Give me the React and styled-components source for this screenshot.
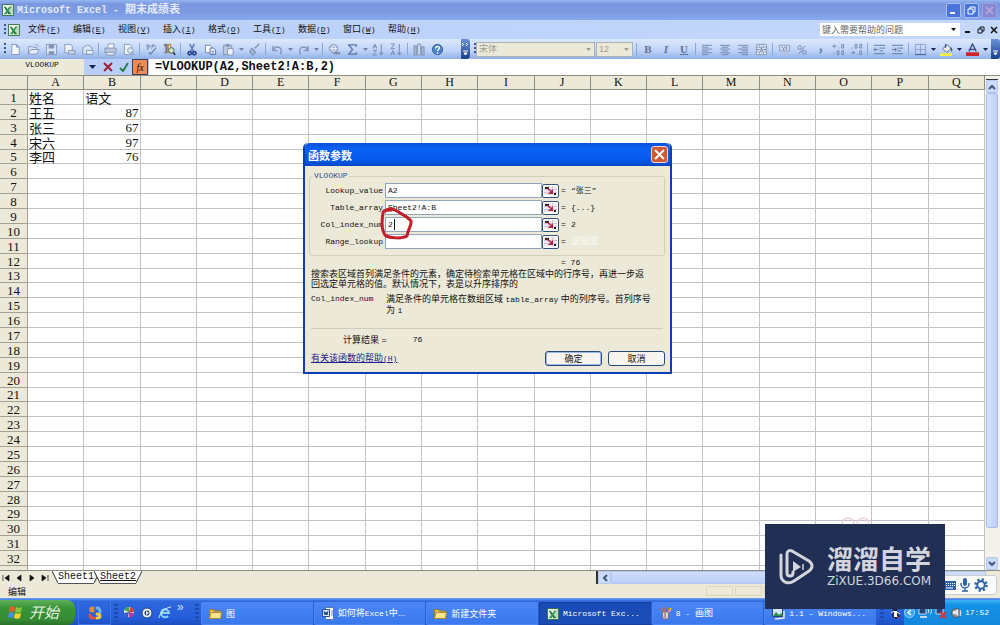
import React from 'react'
import styled, { createGlobalStyle } from 'styled-components'

const columns = 'ABCDEFGHIJKLMNOPQ'.split('')
const rowCount = 33

const cells = {
  A1: '姓名', B1: '语文',
  A2: '王五', B2: 87,
  A3: '张三', B3: 67,
  A4: '宋六', B4: 97,
  A5: '李四', B5: 76,
}

const menus = [
  ['文件', 'F'], ['编辑', 'E'], ['视图', 'V'], ['插入', 'I'], ['格式', 'O'],
  ['工具', 'T'], ['数据', 'D'], ['窗口', 'W'], ['帮助', 'H'],
]

const args = [
  { id: 'lookup', label: 'Lookup_value', value: 'A2', result: '“张三”' },
  { id: 'table', label: 'Table_array', value: 'Sheet2!A:B', result: '{...}' },
  { id: 'col', label: 'Col_index_num', value: '2', result: '2', caret: true },
  { id: 'range', label: 'Range_lookup', value: '', result: '逻辑值', ghost: true },
]

const tasks = [
  { icon: 'folder', cjk: '图' },
  { icon: 'word', cjk: '如何将', text: 'Excel', after: '中...' },
  { icon: 'folder', cjk: '新建文件夹' },
  { icon: 'excel', text: 'Microsoft Exc...', active: true },
  { icon: 'paint', text: '8 - ', after: '画图' },
  { icon: 'image', text: '1.1 - Windows...' },
]

/* toolbar drawings, 14 x 14 */
const g = '#8296b8'
const glyphs = {
  page: <path d="M3 1.5h5l3 3v8H3z M8 1.5v3h3" fill="#f4f7fd" stroke={g} />,
  open: <path d="M1.5 12V4h4l1 1h4v2 M1.5 12l2.500-5h9l-2.500 5z M8 3c2-2 4-1 4 1" fill="#e4ebf7" stroke={g} />,
  save: <><path d="M1.500 1.500h11v11h-11z" fill="#dbe5f5" stroke={g} /><path d="M4 2h6v4H4z M4 9h6v3H4z" fill={g} /></>,
  mail: <><path d="M2 1.500h6l2 2v7H2z" fill="#eef3fb" stroke={g} /><path d="M6 8h7v4H6z" fill="#c9d6ea" stroke={g} /></>,
  lock: <><path d="M2 5l5-3 5 3v7H2z" fill="#dde6f5" stroke={g} /><path d="M6 8h7v4H6z" fill="#eff3fb" stroke={g} /></>,
  print: <><path d="M4 5l1-4h6l-1 4" fill="#fff" stroke={g} /><path d="M1 5.500h12v5H1z" fill="#b9c6dd" stroke={g} /><path d="M3 10h8v3H3z" fill="#eee" stroke={g} /></>,
  preview: <><path d="M2.500 1.500h6l2 2v9h-8z" fill="#eef3fb" stroke={g} /><circle cx="9" cy="8" r="3" fill="#dbe6f6" stroke={g} /><path d="M11 10l2 3" stroke={g} /></>,
  spell: <><path d="M1 3h5M3 1v6M2 7l4-4M7 3h5M9 1l-2 5" stroke="#7389b3" fill="none" /><path d="M4 10l2 2 6-7" stroke="#6d88bd" fill="none" strokeWidth="1.5" /></>,
  research: <><path d="M1 1h4v10H1z" fill="#6d7096" /><path d="M5 1h4v10H5z" fill="#b8974a" /><path d="M2 3v7M7 3v7" stroke="#fff" /><circle cx="9" cy="8" r="3" fill="#cdeab2" stroke="#4d5e7d" /><path d="M11 10l2 3" stroke="#3b4665" strokeWidth="2" /></>,
  cut: <><path d="M4 1l4 8M9 1L5 9" stroke="#5a78ad" strokeWidth="1.500" /><circle cx="4" cy="11" r="1.700" fill="none" stroke="#27478a" strokeWidth="1.800" /><circle cx="9" cy="11" r="1.700" fill="none" stroke="#27478a" strokeWidth="1.800" /></>,
  copy: <><path d="M1.500 2.500h5l2 2v6h-7z" fill="#fff" stroke="#6482b5" /><path d="M6.500 5.500h4l2 2v5h-6z" fill="#e8f0fc" stroke="#5273ab" /><path d="M8 9h3M8 11h3" stroke="#6482b5" /></>,
  paste: <><path d="M1.500 2.500h9v10h-9z" fill="#bac8df" stroke={g} /><path d="M4 1h4v3H4z" fill={g} /><path d="M6 6h6v7H6z" fill="#edf2fa" stroke={g} /></>,
  brush: <path d="M12 1L7 6M4 6l4 4-3 3-3-4z" stroke={g} fill="#aebcd4" strokeWidth="1.500" />,
  undo: <path d="M2 3v5h5M2 8c2-5 9-5 9 1 0 1 0 2-1 3" stroke={g} fill="none" strokeWidth="1.500" />,
  redo: <path d="M12 3v5H7M12 8c-2-5-9-5-9 1 0 1 0 2 1 3" stroke={g} fill="none" strokeWidth="1.500" />,
  link: <><circle cx="6" cy="6" r="4.500" fill="#b3bdd3" stroke={g} /><path d="M2 6h8M6 2c-3 3-3 5 0 8M6 2c3 3 3 5 0 8" stroke="#eef" fill="none" /><path d="M6 11h3M9 11h4" stroke="#8393b1" strokeWidth="3" /></>,
  sum: <path d="M11 4V2H3l4 5-4 5h8v-2" stroke="#5d76a8" fill="none" strokeWidth="1.500" />,
  sortAsc: <path d="M1 6l2-5 2 5M2 4h3M1 8h4l-4 5h4M10 1v11M8 10l2 3 2-3" stroke="#7388b0" fill="none" />,
  sortDesc: <path d="M1 1h4L1 6h4M1 13l2-5 2 5M2 11h3M10 1v11M8 10l2 3 2-3" stroke="#7388b0" fill="none" />,
  chart: <><path d="M1 3h3v10H1z M9 4h3v9H9z" fill="#a4b4d0" stroke={g} /><path d="M5 1h3v12H5z" fill="#d3dcec" stroke={g} /></>,
  help: <><circle cx="7" cy="7" r="5.500" fill="#4c84c8" stroke="#2c5b9c" /><path d="M5 6c0-3 4-3 4-.5C9 7 7 7 7 8.500M7 10v1.500" stroke="#fff" fill="none" strokeWidth="1.500" /></>,
  left: <path d="M1 2.500h11M1 4.500h7M1 6.500h11M1 8.500h7M1 10.500h11M1 12.500h7" stroke="#6f86ae" />,
  center: <path d="M1 2.500h11M3 4.500h7M1 6.500h11M3 8.500h7M1 10.500h11M3 12.500h7" stroke="#6f86ae" />,
  right: <path d="M1 2.500h11M5 4.500h7M1 6.500h11M5 8.500h7M1 10.500h11M5 12.500h7" stroke="#6f86ae" />,
  merge: <><path d="M1.500 1.500h11v11h-11z M1 4.500h12M1 9.500h12M5 1v3M9 1v3M5 10v3M9 10v3" stroke="#8d9dba" fill="#e1e9f6" /><path d="M2 7h3M9 7h3M6 9l1-4 1 4" stroke="#66799e" fill="none" /></>,
  currency: <><path d="M1.500 2.500h11v6h-11z" stroke="#8d9dba" fill="#cfdaec" /><path d="M4 4l2 2 2-2M6 6v2M9 4v3" stroke="#7589ad" fill="none" /><path d="M5 10h6v3H5z" fill="#b6c3d9" /></>,
  percent: <><circle cx="4" cy="5" r="2" fill="none" stroke="#7388b0" /><circle cx="9" cy="10" r="2" fill="none" stroke="#7388b0" /><path d="M10 3L3 12" stroke="#7388b0" /></>,
  comma: <path d="M6 7h2v2l-2 2" fill="none" stroke="#6980ab" strokeWidth="1.500" />,
  decInc: <path d="M5 3.500H1M3 1.500l-2 2 2 2M8 5v1M10.500 1.500h2v4h-2zM2 11v1M5.500 8.500h2v4h-2zM10.500 8.500h2v4h-2z" stroke="#7388b0" fill="none" />,
  decDec: <path d="M2 5v1M5.500 1.500h2v4h-2zM10.500 1.500h2v4h-2zM1 10.500h4M3 8.500l2 2-2 2M8 12v1M10.500 8.500h2v4h-2z" stroke="#7388b0" fill="none" />,
  outdent: <path d="M1 2.500h12M7 5.500h6M7 8.500h4M1 11.500h12M6 7H1M3 5L1 7l2 2" stroke="#5f77a4" fill="none" />,
  indent: <path d="M1 2.500h12M7 5.500h6M7 8.500h4M1 11.500h12M1 7h5M4 5l2 2-2 2" stroke="#5f77a4" fill="none" />,
  border: <><path d="M1.500 1.500h11v11M1.500 1.500v11M7 1.500v11M1.500 7h11" stroke="#8da2c8" fill="none" /><path d="M1 12.500h12" stroke="#3f5682" /></>,
  fill: <><path d="M3 6l5-4 4 4-5 4z" fill="#f1f3f5" stroke="#52698d" /><path d="M6 1v4M11 5c2 1 2 3 1 4" stroke="#40577e" fill="none" strokeWidth="1.500" /><path d="M0 11h13v3H0z" fill="#f5ee3d" /></>,
  fontColor: <><path d="M3 9l4-8 4 8M4 7h6" stroke="#3c5385" fill="none" strokeWidth="1.500" /><path d="M0 10h14v4H0z" fill="#d3222a" /></>,
}

const standardTools = [
  'page', 'open', 'save', 'mail', 'lock', '|', 'print', 'preview', '|', 'spell', 'research', '|',
  'cut', 'copy', 'paste', 'v', 'brush', '|', 'undo', 'v', 'redo', 'v', '|', 'link', 'sum', 'v',
  'sortAsc', 'sortDesc', '|', 'chart', 'help',
]
const alignTools = ['left', 'center', 'right', 'merge', '|', 'currency', 'percent', 'comma', 'decInc', 'decDec', '|', 'outdent', 'indent', '|']

const Arrow = () => (
  <svg width="5" height="3" viewBox="0 0 5 3"><path d="M0 0h5L2.500 3z" fill="currentColor" /></svg>
)

const ExcelIcon = () => (
  <svg width="12" height="12" viewBox="0 0 13 13">
    <path d="M.5.5h12v12H.5z" fill="#e9f3e6" stroke="#2f6e45" />
    <path d="M8 2h4v9H8z" fill="#bcd8bf" />
    <path d="M2 3h2l6 8H7z" fill="#1f7a3a" />
    <path d="M10 3H8l-6 8h3z" fill="#2f9a50" />
  </svg>
)

const taskIcons = {
  folder: (
    <svg width="13" height="12" viewBox="0 0 13 12">
      <path d="M.5 10.500v-9h4l1 1.500h6v7.500z" fill="#e9b93f" stroke="#9b7a22" />
      <path d="M.5 10.500l1.500-6h10.500l-1 6z" fill="#fbe58b" stroke="#b08d30" />
    </svg>
  ),
  word: (
    <svg width="12" height="13" viewBox="0 0 12 13">
      <path d="M3.500.5h8v12h-8z" fill="#fff" stroke="#5676ae" />
      <path d="M.5 2.500h7v7h-7z" fill="#dfe8f8" stroke="#234b96" />
      <path d="M2 4l1 4 1-3 1 3 1-4" fill="none" stroke="#19408d" />
      <path d="M9 4h2M9 6h2M9 8h2" stroke="#6e8bc0" />
    </svg>
  ),
  excel: <ExcelIcon />,
  paint: (
    <svg width="12" height="13" viewBox="0 0 12 13">
      <path d="M2 5h7l-1 7H3z" fill="#d8d8dc" stroke="#6c6f7c" />
      <path d="M3 5L1 1M5 5V0M7 5l2-4" stroke="#c8673a" strokeWidth="1.500" />
      <path d="M9 5l2-4" stroke="#e9c23e" strokeWidth="1.500" />
      <path d="M5 6v5" stroke="#b04040" />
    </svg>
  ),
  image: (
    <svg width="13" height="12" viewBox="0 0 13 12">
      <path d="M.5.5h10v8H.5z" fill="#cfe8f8" stroke="#2c4468" />
      <path d="M1 8l3-4 3 3 2-2 2 3z" fill="#2f8b49" />
      <path d="M3 11l9-1V3" stroke="#e9edf5" fill="none" strokeWidth="1.500" />
    </svg>
  ),
}

function Tool({ name }) {
  if (name === '|') return <Divider />
  if (name === 'v') return <DropArrow type="button" aria-label="more"><Arrow /></DropArrow>
  return (
    <ToolButton type="button" aria-label={name}>
      <svg width="13" height="13" viewBox="0 0 14 14">{glyphs[name]}</svg>
    </ToolButton>
  )
}

function Sheet() {
  return (
    <SheetArea>
      <TableWrap>
        <Table>
          <thead>
            <tr>
              <Corner />
              {columns.map(c => <ColHead key={c} scope="col">{c}</ColHead>)}
            </tr>
          </thead>
          <tbody>
            {Array.from({ length: rowCount }, (_, i) => i + 1).map(n => (
              <tr key={n}>
                <RowHead scope="row">{n}</RowHead>
                {columns.map(c => (
                  <Cell key={c} $number={typeof cells[c + n] === 'number'}>{cells[c + n]}</Cell>
                ))}
              </tr>
            ))}
          </tbody>
        </Table>
      </TableWrap>
      <VScroll>
        <Splitter />
        <ScrollButton type="button" aria-label="up"><svg width="8" height="6" viewBox="0 0 8 6"><path d="M1 5l3-3 3 3" fill="none" stroke="#3f5682" strokeWidth="2" /></svg></ScrollButton>
        <VThumb />
        <ScrollButton type="button" aria-label="down"><svg width="8" height="6" viewBox="0 0 8 6"><path d="M1 1l3 3 3-3" fill="none" stroke="#3f5682" strokeWidth="2" /></svg></ScrollButton>
      </VScroll>
    </SheetArea>
  )
}

function FunctionDialog() {
  return (
    <Dialog role="dialog" aria-label="函数参数">
      <DialogTitle>
        函数参数
        <CloseButton type="button" aria-label="close">
          <svg width="11" height="11" viewBox="0 0 11 11"><path d="M1 1l9 9M10 1l-9 9" stroke="#fff" strokeWidth="2" /></svg>
        </CloseButton>
      </DialogTitle>
      <DialogBody>
        <Group>
          <Legend>VLOOKUP</Legend>
          {args.map(a => (
            <ArgRow key={a.id}>
              <ArgLabel htmlFor={a.id}>{a.label}</ArgLabel>
              <ArgBox $caret={a.caret}>
                <ArgInput id={a.id} defaultValue={a.value} />
                {a.caret && <Caret />}
              </ArgBox>
              <PickButton type="button" aria-label={'select ' + a.label}>
                <svg width="13" height="9" viewBox="0 0 13 9">
                  <path d="M0 0h13v9H0z" fill="#f3e9ee" />
                  <path d="M0 3.500h13M0 6.500h13M4.500 0v9M8.500 0v9" stroke="#d0c4d8" />
                  <path d="M1 1h4v2H1z M10 7h2v2h-2z" fill="#222" />
                  <path d="M3 2l5 4" stroke="#b52440" strokeWidth="1.500" fill="none" />
                  <path d="M9 3v5H4z" fill="#b52440" />
                </svg>
              </PickButton>
              <Equals>=</Equals>
              <Result $ghost={a.ghost}>{a.result}</Result>
            </ArgRow>
          ))}
        </Group>
        <Total>= 76</Total>
        <Description>
          搜索表区域首列满足条件的元素，确定待检索单元格在区域中的行序号，再进一步返<br />
          回选定单元格的值。默认情况下，表是以升序排序的
        </Description>
        <ArgHelp>
          <Latin>Col_index_num</Latin>
          <div>满足条件的单元格在数组区域 <Latin>table_array</Latin> 中的列序号。首列序号<br />为 <Latin>1</Latin></div>
        </ArgHelp>
        <Rule />
        <Outcome>
          <span>计算结果 =</span>
          <Latin>76</Latin>
        </Outcome>
        <DialogFooter>
          <HelpLink href="#help">有关该函数的帮助<Latin>(H)</Latin></HelpLink>
          <DialogButton type="button" $primary>确定</DialogButton>
          <DialogButton type="button">取消</DialogButton>
        </DialogFooter>
      </DialogBody>
      <RedMark width="36" height="36" viewBox="0 0 36 36">
        <path d="M5 6C9 2 13 4 17 6c4 3 10 5 14 10 1 4-3 8-4 15-5 3-16 2-21 0C1 26 2 14 3 8c0-3 4-3 8-3" fill="none" stroke="#c41e2a" strokeWidth="3" strokeLinecap="round" strokeLinejoin="round" />
      </RedMark>
    </Dialog>
  )
}

function Taskbar() {
  return (
    <Bar>
      <StartButton type="button">
        <svg width="15" height="15" viewBox="0 0 15 15">
          <path d="M2 2c2-1 3-1 5 0L6 7C4 6 3 6 1 7z" fill="#f0592a" />
          <path d="M8 2c2 1 4 1 6 0l-1 5c-2 1-4 1-6 0z" fill="#8cc63e" />
          <path d="M1 8c2-1 3-1 5 0l-1 5c-2-1-3-1-5 0z" fill="#4a8ff0" />
          <path d="M7 8c2 1 4 1 6 0l-1 5c-2 1-4 1-6 0z" fill="#fcd22f" />
        </svg>
        开始
      </StartButton>
      <Pinned type="button" aria-label="office">
        <svg width="14" height="14" viewBox="0 0 14 14" fill="none" strokeWidth="3" strokeLinecap="round">
          <path d="M5 2C2 2 2 5 5 5" stroke="#f08a35" /><path d="M9 2c3 0 3 2 3 4" stroke="#6ab6f5" />
          <path d="M2 9c0 3 2 3 4 3" stroke="#e7513c" /><path d="M9 8c4 0 4 4 0 4" stroke="#f1c84a" />
        </svg>
      </Pinned>
      <Grip />
      <QuickLaunch>
        <IconButton type="button" aria-label="pinwheel">
          <svg width="13" height="13" viewBox="0 0 13 13">
            <circle cx="6" cy="6" r="5" fill="#eee" />
            <path d="M6 6L1 4a5 5 0 0 1 5-3z" fill="#3fa34a" /><path d="M6 6l1-5a5 5 0 0 1 4 5z" fill="#e03a3a" />
            <path d="M6 6l5 1a5 5 0 0 1-5 5z" fill="#b53aa0" /><path d="M6 6l-1 5a5 5 0 0 1-4-4z" fill="#3658c0" />
          </svg>
        </IconButton>
        <IconButton type="button" aria-label="player">
          <svg width="12" height="12" viewBox="0 0 12 12"><circle cx="6" cy="6" r="5" fill="#e9eef8" stroke="#27406f" /><circle cx="6" cy="6" r="2.500" fill="#26406e" /><path d="M5 4l3 2-3 2z" fill="#fff" /></svg>
        </IconButton>
        <IconButton type="button" aria-label="browser">
          <svg width="14" height="13" viewBox="0 0 14 13"><path d="M3 7h8a4 4 0 1 0-1 3" fill="none" stroke="#8ed3fa" strokeWidth="2" /><path d="M1 12C1 8 8 1 13 1" fill="none" stroke="#d3efff" /></svg>
        </IconButton>
        <More>»</More>
      </QuickLaunch>
      <Grip />
      <Tasks>
        {tasks.map((t, i) => (
          <Task type="button" key={i} $active={t.active}>
            {taskIcons[t.icon]}
            <TaskText>{t.cjk}{t.text && <TaskLatin>{t.text}</TaskLatin>}{t.after}</TaskText>
          </Task>
        ))}
      </Tasks>
      <Grip />
      <PenguinCell>
        <svg width="11" height="12" viewBox="0 0 11 12"><circle cx="5" cy="3" r="2.500" fill="#1c2538" /><path d="M2 5h7l1 5-4 2-4-2z" fill="#26304a" /><path d="M4 4h3v6H4z" fill="#fff" /><path d="M1 6l3-2M7 5l3 2" stroke="#fff" /><path d="M7 9l2 2" stroke="#e44" /></svg>
      </PenguinCell>
      <Tray>
        <svg width="11" height="11" viewBox="0 0 11 11"><circle cx="5.500" cy="5.500" r="5" fill="#3fa2f2" stroke="#9fd2fa" /><path d="M7 3L4 5.500 7 8" fill="none" stroke="#fff" strokeWidth="1.500" /></svg>
        <svg width="14" height="12" viewBox="0 0 14 12"><path d="M1 1h7v6H1z" fill="#24457c" stroke="#c7d8ee" /><path d="M2 10h7" stroke="#c7d8ee" strokeWidth="2" /><path d="M10 2c1 1 1 3 0 4M12 1c2 2 2 4 0 6" stroke="#e0eaf8" fill="none" /></svg>
        <svg width="13" height="12" viewBox="0 0 13 12"><path d="M1 1h7v6H1z" fill="#24457c" stroke="#c7d8ee" /><path d="M5 5l6 6M11 5l-6 6" stroke="#d8343c" strokeWidth="2" /></svg>
        <svg width="11" height="12" viewBox="0 0 11 12"><circle cx="5" cy="6" r="4.500" fill="#8b93a3" stroke="#4e5768" /><path d="M2 4h2l3-2v7L4 7H2z" fill="#e4e7ee" /><path d="M9 3c1 2 1 4 0 6" stroke="#fff" fill="none" /></svg>
        <Clock>17:52</Clock>
      </Tray>
    </Bar>
  )
}

function App() {
  return (
    <Page>
      <GlobalStyle />
      <TitleBar>
        <ExcelIcon />
        <TitleText><TitleLatin>Microsoft Excel - </TitleLatin>期末成绩表</TitleText>
        <WinButton type="button" aria-label="minimize"><svg width="9" height="9" viewBox="0 0 9 9"><path d="M1 7h5" stroke="#fff" strokeWidth="2" /></svg></WinButton>
        <WinButton type="button" aria-label="restore"><svg width="9" height="9" viewBox="0 0 9 9"><path d="M3 3V1h5v5H6M1 3h5v5H1z" stroke="#fff" fill="none" /></svg></WinButton>
        <WinButton type="button" aria-label="close" $dim><svg width="9" height="9" viewBox="0 0 9 9"><path d="M1 1l7 7M8 1L1 8" stroke="#b3a3d6" strokeWidth="2" /></svg></WinButton>
      </TitleBar>

      <MenuBar>
        <DotGrip />
        <MenuIcon><ExcelIcon /></MenuIcon>
        {menus.map(([name, key]) => (
          <MenuItem type="button" key={key}>{name}<Latin>(<u>{key}</u>)</Latin></MenuItem>
        ))}
        <Ask>
          <AskInput aria-label="键入需要帮助的问题" placeholder="键入需要帮助的问题" />
          <Arrow />
        </Ask>
        <DocButtons>
          <IconButton type="button" aria-label="minimize"><svg width="8" height="8" viewBox="0 0 8 8"><path d="M1 6h5" stroke="#111" strokeWidth="2" /></svg></IconButton>
          <IconButton type="button" aria-label="restore"><svg width="8" height="8" viewBox="0 0 8 8"><path d="M3 3V1h4v4H5M1 3h4v4H1z" stroke="#111" fill="none" /></svg></IconButton>
          <IconButton type="button" aria-label="close"><svg width="8" height="8" viewBox="0 0 8 8"><path d="M1 1l6 6M7 1L1 7" stroke="#111" strokeWidth="1.500" /></svg></IconButton>
        </DocButtons>
      </MenuBar>

      <ToolBars>
        <StandardBar>
          <DotGrip $tight />
          {standardTools.map((t, i) => <Tool key={i} name={t} />)}
        </StandardBar>
        <BarEnd><svg width="7" height="14" viewBox="0 0 7 14"><path d="M0 1l1.500 1.500L0 4M4 1l1.500 1.500L4 4" stroke="#fff" fill="none" /><path d="M1 9h5M2 11l1.500 2L5 11z" stroke="#fff" fill="#fff" /></svg></BarEnd>
        <FormatBar>
          <DotGrip $tight />
          <FakeSelect $wide><select aria-label="font" defaultValue="宋体"><option>宋体</option></select><Arrow /></FakeSelect>
          <FakeSelect><select aria-label="size" defaultValue="12"><option>12</option></select><Arrow /></FakeSelect>
          <Divider />
          <Letter type="button" $bold>B</Letter>
          <Letter type="button" $italic>I</Letter>
          <Letter type="button" $under>U</Letter>
          <Divider />
          {alignTools.map((t, i) => <Tool key={i} name={t} />)}
          <Live>
            {['border', 'v', 'fill', 'v', 'fontColor', 'v'].map((t, i) => <Tool key={i} name={t} />)}
          </Live>
        </FormatBar>
        <BarEnd><svg width="7" height="14" viewBox="0 0 7 14"><path d="M1 9h5M2 11l1.500 2L5 11z" stroke="#fff" fill="#fff" /></svg></BarEnd>
      </ToolBars>

      <FormulaBar>
        <NameBox aria-label="name box" defaultValue="VLOOKUP" />
        <FormulaTools>
          <IconButton type="button" aria-label="names"><svg width="7" height="4" viewBox="0 0 7 4"><path d="M0 0h7L3.500 4z" fill="#16264e" /></svg></IconButton>
          <IconButton type="button" aria-label="cancel"><svg width="10" height="10" viewBox="0 0 10 10"><path d="M1 1l8 8M9 1L1 9" stroke="#a3202f" strokeWidth="2" /></svg></IconButton>
          <IconButton type="button" aria-label="enter"><svg width="10" height="10" viewBox="0 0 10 10"><path d="M1 6l3 3 5-8" stroke="#26804a" fill="none" strokeWidth="2" /></svg></IconButton>
          <FxButton type="button">fx</FxButton>
        </FormulaTools>
        <FormulaInput aria-label="formula" defaultValue="=VLOOKUP(A2,Sheet2!A:B,2)" />
      </FormulaBar>

      <Sheet />

      <TabBar>
        <TabNav>
          {['M1 1v6M7 1v6L3 4z', 'M6 1v6L2 4z', 'M2 1v6l4-3z', 'M7 1v6M1 1v6l4-3z'].map(d => (
            <IconButton type="button" key={d} aria-label="scroll tabs"><svg width="8" height="8" viewBox="0 0 8 8"><path d={d} fill="#111" stroke="#111" strokeWidth=".7" /></svg></IconButton>
          ))}
        </TabNav>
        <svg width="6" height="13" viewBox="0 0 6 13"><path d="M0 0l6 12V0z" fill="#fff" /><path d="M0 0l6 12" stroke="#333" /></svg>
        <SheetTab type="button">Sheet1</SheetTab>
        <svg width="6" height="13" viewBox="0 0 6 13"><path d="M0 0h6v12z" fill="#fff" /><path d="M0 0l6 12M3 6L0 12" stroke="#333" fill="none" /></svg>
        <SheetTab type="button" $under>Sheet2</SheetTab>
        <svg width="6" height="13" viewBox="0 0 6 13"><path d="M0 0h6L0 12z" fill="#fff" /><path d="M6 0L0 12" stroke="#333" /></svg>
        <HScroll>
          <HButton type="button" aria-label="left"><svg width="6" height="8" viewBox="0 0 6 8"><path d="M5 1L2 4l3 3" fill="none" stroke="#3f5682" strokeWidth="2" /></svg></HButton>
          <HThumb />
        </HScroll>
      </TabBar>

      <StatusBar>
        编辑
        <StatusCells><i /><i /><i /><i /></StatusCells>
      </StatusBar>

      <Taskbar />

      <FunctionDialog />

      <ImeBar>
        <svg width="13" height="9" viewBox="0 0 13 9"><path d="M0 0h13v9H0z" fill="#2e62a8" /><path d="M1 2.500h11M1 4.500h11" stroke="#fff" strokeDasharray="1 1" /><path d="M3 7h7" stroke="#fff" /></svg>
        <svg width="10" height="14" viewBox="0 0 10 14"><rect x="3" y="0" width="4" height="8" rx="2" fill="#2e62a8" /><path d="M1 5v1a4 4 0 0 0 8 0V5M5 10v3M2 13h6" fill="none" stroke="#2e62a8" strokeWidth="1.500" /></svg>
        <svg width="14" height="14" viewBox="0 0 14 14"><circle cx="7" cy="7" r="5.500" fill="none" stroke="#2e62a8" strokeWidth="2.500" strokeDasharray="2.160 2.160" /><circle cx="7" cy="7" r="3.700" fill="none" stroke="#2e62a8" strokeWidth="2" /></svg>
      </ImeBar>

      <Watermark>
        <Ears width="30" height="8" viewBox="0 0 30 8"><path d="M1 8a6 6 0 0 1 12 0M16 8a6 6 0 0 1 12 0" fill="none" stroke="#ecd3db" strokeWidth="1.500" /></Ears>
        <svg width="36" height="36" viewBox="0 0 36 36" fill="none" stroke="#d3d5dd">
          <path d="M14 23v1c0 4-6 4-6 0V5c0-3 2-4 5-3l17 10c4 3 4 7 0 10L15 32c-6 4-13 1-13-6V6" strokeWidth="3" strokeLinecap="round" strokeLinejoin="round" />
          <path d="M14 12v11l8-5z" fill="#d3d5dd" stroke="none" />
          <path d="M24 15v6" strokeWidth="1.500" />
        </svg>
        <div>
          <MarkName>溜溜自学</MarkName>
          <MarkUrl>ZiXUE.3D66.COM</MarkUrl>
        </div>
      </Watermark>
    </Page>
  )
}

export default App

const GlobalStyle = createGlobalStyle`
  * {
    box-sizing: border-box;
  }

  body {
    margin: 0;
    overflow: hidden;
    background: #fff;
    font-family: "Liberation Sans", "Noto Sans CJK SC", sans-serif;
  }

  button,
  input,
  select {
    font: inherit;
    color: inherit;
    margin: 0;
    padding: 0;
    border: 0;
    background: none;
    outline: none;
    border-radius: 0;
  }

  svg {
    display: block;
    flex: none;
  }
`

const Page = styled.div`
  position: relative;
  display: flex;
  flex-direction: column;
  height: 100vh;
  color: #111;
  font-size: 9px;
`

const Latin = styled.span`
  font-family: "Liberation Mono", monospace;
  font-size: 8px;
`

const IconButton = styled.button`
  display: flex;
  align-items: center;
  justify-content: center;
`

const TitleBar = styled.header`
  display: flex;
  align-items: center;
  gap: 3px;
  flex: none;
  height: 20px;
  padding: 0 3px 0 2px;
  background: linear-gradient(#94b8f2 0, #7b96e0 4px, #7c9ae2 12px, #86a9ee 100%);
`

const TitleText = styled.h1`
  flex: 1;
  margin: 0;
  color: #e4ecfc;
  font-size: 11px;
  line-height: 16px;
  font-weight: bold;
`

const TitleLatin = styled.span`
  font-family: "Liberation Mono", monospace;
  font-size: 10px;
  white-space: pre;
`

const WinButton = styled(IconButton)`
  width: 15px;
  height: 15px;
  border: 1px solid ${p => (p.$dim ? '#9d9fdc' : '#a9bff2')};
  border-radius: 2px;
  background: ${p => (p.$dim ? '#8488d0' : '#4a74dc')};
`

const MenuBar = styled.nav`
  display: flex;
  align-items: center;
  flex: none;
  height: 19px;
  padding-left: 4px;
  background: linear-gradient(90deg, #b9cffa, #c4d8fb);
`

const DotGrip = styled.span`
  flex: none;
  width: 2px;
  height: 12px;
  margin-right: ${p => (p.$tight ? 0 : 2)}px;
  background: repeating-linear-gradient(#3a5488 0 2px, transparent 2px 4px);
`

const MenuIcon = styled.span`
  margin-right: 8px;
`

const MenuItem = styled.button`
  width: 45px;
  text-align: left;
  font-size: 9px;
  line-height: 14px;
  white-space: nowrap;
`

const Ask = styled.div`
  display: flex;
  align-items: center;
  width: 140px;
  height: 13px;
  margin-left: auto;
  padding: 0 4px 0 2px;
  background: #fff;
`

const AskInput = styled.input`
  flex: 1;
  min-width: 0;
  font-size: 9px;

  &::placeholder {
    color: #666;
    opacity: 1;
  }
`

const DocButtons = styled.div`
  display: flex;
  gap: 5px;
  padding: 0 2px 0 4px;
`

const ToolBars = styled.div`
  display: flex;
  flex: none;
  height: 20px;
  background: #c4d8fb;
`

const StandardBar = styled.div`
  display: flex;
  align-items: center;
  flex: none;
  width: 461px;
  padding-left: 4px;
  background: linear-gradient(#dce9fd, #bdd2f7 60%, #8fb0e6);
`

const FormatBar = styled(StandardBar)`
  flex: 1;
  width: auto;
  min-width: 0;
`

const ToolButton = styled(IconButton)`
  flex: none;
  width: 18px;
  height: 16px;
`

const DropArrow = styled(IconButton)`
  flex: none;
  width: 8px;
  height: 16px;
  color: #6f83a8;
`

const Divider = styled.span`
  flex: none;
  width: 1px;
  height: 12px;
  margin: 0 2px;
  background: #8aa5d6;
`

const BarEnd = styled.span`
  display: flex;
  align-items: center;
  justify-content: center;
  flex: none;
  width: 9px;
  border-radius: 0 3px 3px 0;
  background: linear-gradient(#6d93d6, #17408c);
`

const FakeSelect = styled.label`
  display: flex;
  align-items: center;
  flex: none;
  width: ${p => (p.$wide ? 119 : 37)}px;
  height: 15px;
  margin-right: 1px;
  padding: 0 3px 0 2px;
  border: 1px solid #a9b3bd;
  background: #ece9d8;
  color: #a19e93;

  select {
    appearance: none;
    flex: 1;
    min-width: 0;
    font-size: 9px;
  }
`

const Letter = styled.button`
  width: 18px;
  color: #5f7398;
  font-family: "Liberation Serif", serif;
  font-size: 11px;
  font-weight: bold;
  font-style: ${p => (p.$italic ? 'italic' : 'normal')};
  text-decoration: ${p => (p.$under ? 'underline' : 'none')};
`

const Live = styled.div`
  display: flex;

  ${DropArrow} {
    color: #16264e;
  }
`

const FormulaBar = styled.div`
  display: flex;
  flex: none;
  height: 16px;
  background: #fff;
`

const NameBox = styled.input`
  width: 84px;
  padding-bottom: 5px;
  background: #ece9d8;
  text-align: center;
  font-family: "Liberation Mono", monospace;
  font-size: 8px;
`

const FormulaTools = styled.div`
  display: flex;
  width: 65px;
  background: #b9cffa;

  button {
    width: 16px;
  }
`

const FxButton = styled(IconButton)`
  border: 1px solid #3a3f5c;
  background: #ef8a55;
  font-family: "Liberation Serif", serif;
  font-size: 10px;
  font-style: italic;
`

const FormulaInput = styled.input`
  flex: 1;
  padding-left: 6px;
  font-family: "Liberation Mono", monospace;
  font-size: 12px;
  font-weight: bold;
`

const SheetArea = styled.main`
  display: flex;
  flex: 1;
  min-height: 0;
`

const TableWrap = styled.div`
  flex: 1;
  min-width: 0;
  overflow: hidden;
`

/* the last row runs under the tab bar */
const Table = styled.table`
  width: 100%;
  height: calc(100% + 11px);
  table-layout: fixed;
  border-collapse: separate;
  border-spacing: 0;

  th,
  td {
    padding: 0;
    line-height: 13px;
    vertical-align: bottom;
    white-space: nowrap;
  }
`

const ColHead = styled.th`
  border: 1px solid #8f8d80;
  border-width: 1px 1px 1px 0;
  background: #ece9d8;
  font-family: "Liberation Serif", serif;
  font-size: 12px;
  font-weight: normal;
`

const Corner = styled(ColHead)`
  width: 28px;
`

const RowHead = styled.th`
  border: 1px solid #a3a194;
  border-width: 0 1px 1px 0;
  background: #ece9d8;
  font-family: "Liberation Serif", serif;
  font-size: 13px;
  font-weight: normal;
`

const Cell = styled.td`
  border: 1px solid #c3c3c3;
  border-width: 0 1px 1px 0;
  font-family: ${p => (p.$number ? '"Liberation Serif", serif' : '"Noto Sans CJK SC", sans-serif')};
  font-size: 13px;
  text-align: ${p => (p.$number ? 'right' : 'left')};

  && {
    padding: 0 1px;
  }
`

const VScroll = styled.div`
  display: flex;
  flex-direction: column;
  flex: none;
  width: 15px;
  padding: 1px 2px 0 1px;
  border-top: 1px solid #8f8d80;
  background: #f3f2ea;
`

const Splitter = styled.span`
  height: 3px;
  border-bottom: 1px solid #333;
`

const ScrollButton = styled(IconButton)`
  flex: none;
  height: 13px;
  border: 1px solid #b3c7f2;
  border-radius: 2px;
  background: #cddbfb;
`

const VThumb = styled.div`
  flex: 1;
  margin-bottom: 29px;
  border: 1px solid #a9bff0;
  border-radius: 2px;
  background: linear-gradient(90deg, #d6e2fd, #bdcff8);
`

const TabBar = styled.div`
  display: flex;
  align-items: flex-start;
  flex: none;
  height: 14px;
  border-top: 1px solid #8f8d80;
  background: #ece9d8;
`

const TabNav = styled.div`
  display: flex;
  gap: 5px;
  height: 13px;
  padding: 0 3px 0 2px;
`

const SheetTab = styled.button`
  height: 13px;
  border-bottom: 1px solid #555;
  background: #fff;
  font-family: "Liberation Mono", monospace;
  font-size: 10px;
  line-height: 12px;
  text-decoration: ${p => (p.$under ? 'underline' : 'none')};
`

const HScroll = styled.div`
  display: flex;
  width: 390px;
  height: 13px;
  margin: 0 14px 0 auto;
  border-left: 2px solid #333;
`

const HButton = styled(ScrollButton)`
  width: 13px;
`

const HThumb = styled.div`
  flex: 1;
  border: 1px solid #b3c7f2;
  background: linear-gradient(#d0defc, #bccff8);
`

const StatusBar = styled.footer`
  display: flex;
  align-items: center;
  flex: none;
  height: 14px;
  padding-left: 8px;
  background: #ece9d8;
`

const StatusCells = styled.span`
  display: flex;
  gap: 2px;
  margin: 0 180px 0 auto;

  i {
    width: 27px;
    height: 10px;
    border: 1px solid #dad6c4;
  }
`

const Bar = styled.div`
  display: flex;
  flex: none;
  height: 27px;
  padding-top: 2px;
  background: linear-gradient(#6aa2f2 0, #2f68dc 3px, #245edb 70%, #1d4fc0);
`

const StartButton = styled.button`
  display: flex;
  align-items: center;
  gap: 6px;
  width: 75px;
  padding-left: 8px;
  border-radius: 0 8px 8px 0;
  background: linear-gradient(#5fb05b, #3a9539 30%, #348a33 80%, #2a702b);
  color: #e6f3e2;
  font-size: 15px;
  font-style: italic;
  line-height: 20px;
`

const Pinned = styled(IconButton)`
  width: 33px;
  margin-left: 3px;
  border: 1px solid #3f74e4;
`

const Grip = styled.span`
  flex: none;
  width: 4px;
  height: 17px;
  margin: 4px 2px 0 3px;
  background: repeating-linear-gradient(#1a3f9c 0 2px, transparent 2px 4px);
  opacity: 0.7;
`

const QuickLaunch = styled.div`
  display: flex;
  align-items: center;
  gap: 5px;
  width: 72px;
  padding-left: 3px;
`

const More = styled.span`
  align-self: flex-start;
  color: #cfe0ff;
  font-size: 12px;
  line-height: 14px;
`

const Tasks = styled.div`
  display: flex;
  flex: 1;
  min-width: 0;
  padding-top: 2px;
`

const Task = styled.button`
  display: flex;
  align-items: center;
  gap: 4px;
  flex: 1;
  min-width: 0;
  padding-left: 7px;
  border: 1px solid ${p => (p.$active ? '#173f9c' : '#4d86f2')};
  border-right-color: #2a5fd0;
  border-radius: 2px;
  background: ${p => (p.$active ? '#1b4bb4' : 'linear-gradient(#4a86f5, #3a78ee)')};
  color: #fff;
`

const TaskText = styled.span`
  overflow: hidden;
  font-size: 9px;
  line-height: 14px;
  white-space: nowrap;
`

const TaskLatin = styled(Latin)`
  white-space: pre;
`

const PenguinCell = styled.div`
  display: flex;
  align-items: center;
  width: 18px;
  padding-left: 4px;
`

const Tray = styled.div`
  display: flex;
  align-items: center;
  gap: 3px;
  width: 96px;
  background: linear-gradient(#3fb0f2, #1391e6 20%, #1288dc);
`

const Clock = styled.time`
  color: #fff;
  font-family: "Liberation Mono", monospace;
  font-size: 8px;
`

const Dialog = styled.section`
  position: absolute;
  top: 143px;
  left: 303px;
  width: 369px;
  border: 2px solid #0b3fb5;
  border-top: 0;
  border-radius: 5px 5px 0 0;
  background: #ece9d8;
`

const DialogTitle = styled.h2`
  display: flex;
  align-items: center;
  justify-content: space-between;
  height: 23px;
  margin: 0;
  padding: 0 2px 0 3px;
  border-radius: 5px 5px 0 0;
  background: linear-gradient(#0a4fd6, #0a62f5 25%, #0558ea 75%, #0346c4);
  color: #fff;
  font-size: 11px;
`

const CloseButton = styled(IconButton)`
  width: 17px;
  height: 17px;
  border: 1px solid #f3d9cf;
  border-radius: 3px;
  background: #d0583a;
`

const DialogBody = styled.div`
  padding: 4px 5px 6px 4px;
  line-height: 10px;
`

const Group = styled.fieldset`
  margin: 0;
  padding: 0 0 5px;
  border: 1px solid #d3d0bd;
  border-radius: 3px;
`

const Legend = styled.legend`
  margin-left: 3px;
  padding: 0 1px;
  color: #2d4f95;
  font-family: "Liberation Mono", monospace;
  font-size: 8px;
  line-height: 12px;
`

const ArgRow = styled.div`
  display: flex;
  align-items: center;
  height: 17px;
  font-family: "Liberation Mono", "Noto Sans CJK SC", monospace;
  font-size: 8px;
`

const ArgLabel = styled.label`
  width: 73px;
  text-align: right;
`

const ArgBox = styled.div`
  display: flex;
  align-items: center;
  width: 157px;
  height: 15px;
  margin-left: 2px;
  border: 1px solid #8fa6bd;
  background: #fff;

  input {
    flex: ${p => (p.$caret ? 'none' : 1)};
    width: 8px;
  }
`

const ArgInput = styled.input`
  min-width: 0;
  padding-left: 2px;
`

/* text cursor, right after the typed digit */
const Caret = styled.span`
  width: 1px;
  height: 11px;
  background: #111;
`

const PickButton = styled(IconButton)`
  width: 17px;
  height: 14px;
  border: 1px solid #33517f;
  border-radius: 2px;
  background: #fff;
`

const Equals = styled.span`
  width: 12px;
  padding-left: 2px;
`

const Result = styled.output`
  color: ${p => (p.$ghost ? '#fbfaf4' : '#111')};
  font-size: ${p => (p.$ghost ? 9 : 8)}px;
`

const Total = styled.div`
  padding: 2px 0 1px 252px;
  font-family: "Liberation Mono", monospace;
  font-size: 8px;
`

const Description = styled.p`
  margin: 0 2px;
  white-space: nowrap;
`

const ArgHelp = styled.div`
  display: flex;
  justify-content: space-between;
  margin: 5px 2px 0;
  white-space: nowrap;

  div {
    width: 277px;
  }
`

const Rule = styled.hr`
  margin: 12px 2px 6px;
  border: 0;
  border-top: 1px solid #cfccb9;
`

const Outcome = styled.div`
  display: flex;
  gap: 26px;
  padding-left: 34px;
`

const DialogFooter = styled.div`
  display: flex;
  align-items: center;
  gap: 6px;
  margin-top: 6px;
`

const HelpLink = styled.a`
  margin: 0 auto 0 2px;
  color: #1c1c8c;
`

const DialogButton = styled.button`
  width: 57px;
  height: 15px;
  border: 1px solid #29487c;
  border-radius: 3px;
  background: #f6f5ef;
  box-shadow: ${p => (p.$primary ? 'inset 0 0 0 1px #9db9ee' : 'none')};
`

const RedMark = styled.svg`
  position: absolute;
  top: 62px;
  left: 75px;
`

const ImeBar = styled.div`
  position: absolute;
  right: 3px;
  bottom: 30px;
  display: flex;
  align-items: center;
  gap: 4px;
  height: 20px;
  padding: 0 8px 0 4px;
  border: 1px solid #c9ccd2;
  border-radius: 3px;
  background: #fbfbfb;
`

const Watermark = styled.aside`
  position: absolute;
  right: 55px;
  bottom: 16px;
  display: flex;
  align-items: center;
  gap: 12px;
  width: 180px;
  height: 85px;
  padding-left: 14px;
  background: #222f55;
  color: #d3d5dd;
`

const Ears = styled.svg`
  position: absolute;
  bottom: 100%;
  left: 76px;
`

const MarkName = styled.div`
  font-size: 26px;
  font-weight: bold;
  line-height: 28px;
`

const MarkUrl = styled.div`
  font-family: "DejaVu Sans", sans-serif;
  font-size: 12px;
  line-height: 14px;
`
